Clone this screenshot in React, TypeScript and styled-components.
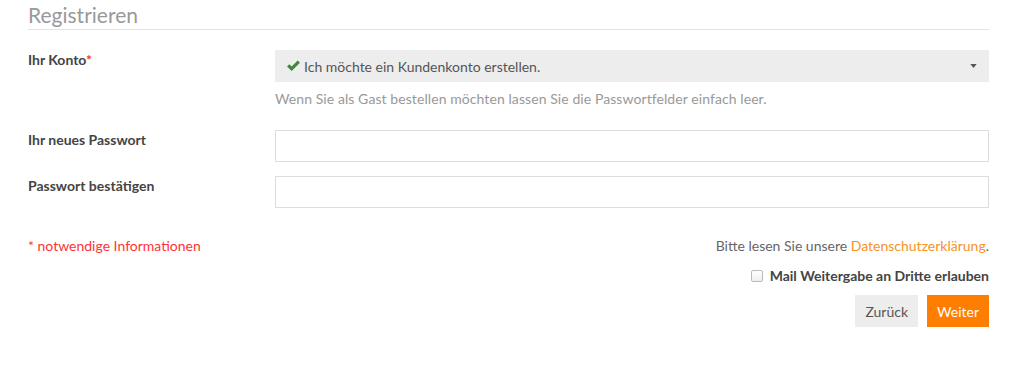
import React from 'react';
import styled, { createGlobalStyle } from 'styled-components';

const Global = createGlobalStyle`
  body {
    margin: 0;
    background: #fff;
    font-family: Lato, "Open Sans", sans-serif;
    font-size: 14px;
    color: #555;
  }
`;

const Page = styled.div`
  padding: 0 35px 0 28px;
`;

const Heading = styled.h2`
  margin: 0;
  padding: 4px 0 3px;
  font-size: 21px;
  font-weight: 400;
  color: #999;
  line-height: 22px;
  border-bottom: 1px solid #e3e3e3;
`;

const Row = styled.div<{ $top: number }>`
  display: grid;
  grid-template-columns: 247px 1fr;
  margin-top: ${p => p.$top}px;
`;

const Label = styled.label`
  font-weight: 700;
  color: #444;
  line-height: 20px;
`;

const Star = styled.span`
  color: #e33;
`;

const Select = styled.div`
  display: flex;
  align-items: center;
  height: 32px;
  padding: 0 12px 0 11px;
  background: #ededed;
  color: #555;
`;

const SelectText = styled.span`
  flex: 1;
  margin-left: 3px;
`;

const Help = styled.div`
  margin-top: 8px;
  color: #999;
  letter-spacing: 0.08px;
`;

const Input = styled.input`
  box-sizing: border-box;
  display: block;
  width: 100%;
  height: 32px;
  border: 1px solid #ddd;
  background: #fff;
  outline: none;
`;

const Footer = styled.div`
  display: flex;
  justify-content: space-between;
  margin-top: 29px;
`;

const Required = styled.div`
  color: #f33;
`;

const Privacy = styled.div`
  color: #666;
`;

const Link = styled.a`
  color: #f7931e;
  text-decoration: none;
`;

const Options = styled.div`
  display: flex;
  flex-direction: column;
  align-items: flex-end;
`;

const CheckRow = styled.label`
  display: flex;
  align-items: center;
  gap: 7px;
  margin-top: 13px;
  font-weight: 700;
  color: #444;
`;

const Box = styled.span`
  box-sizing: border-box;
  width: 12px;
  height: 12px;
  border: 1px solid #bbb;
  border-radius: 2px;
  background: linear-gradient(#fff, #eee);
`;

const Buttons = styled.div`
  display: flex;
  gap: 9px;
  margin-top: 11px;
`;

const Button = styled.button<{ $primary?: boolean }>`
  height: 32px;
  padding: 0 10px;
  border: 0;
  font: inherit;
  background: ${p => (p.$primary ? '#ff7d00' : '#ededed')};
  color: ${p => (p.$primary ? '#fff' : '#555')};
`;

const Check = () => (
  <svg width="15" height="12" viewBox="0 0 16 13">
    <path d="M1 7 L3.5 4.5 L6 7 L12.5 0.5 L15 3 L6 12 Z" fill="#3e8a3a" />
  </svg>
);

const Caret = () => (
  <svg width="7" height="4" viewBox="0 0 8 5">
    <path d="M0 0 H8 L4 5 Z" fill="#555" />
  </svg>
);

export default function App() {
  return (
    <Page>
      <Global />
      <Heading>Registrieren</Heading>

      <Row $top={20}>
        <Label>Ihr Konto<Star>*</Star></Label>
        <div>
          <Select>
            <Check />
            <SelectText>Ich möchte ein Kundenkonto erstellen.</SelectText>
            <Caret />
          </Select>
          <Help>Wenn Sie als Gast bestellen möchten lassen Sie die Passwortfelder einfach leer.</Help>
        </div>
      </Row>

      <Row $top={23}>
        <Label>Ihr neues Passwort</Label>
        <Input type="password" />
      </Row>

      <Row $top={14}>
        <Label>Passwort bestätigen</Label>
        <Input type="password" />
      </Row>

      <Footer>
        <Required>* notwendige Informationen</Required>
        <Options>
          <Privacy>Bitte lesen Sie unsere <Link>Datenschutzerklärung</Link>.</Privacy>
          <CheckRow><Box />Mail Weitergabe an Dritte erlauben</CheckRow>
          <Buttons>
            <Button>Zurück</Button>
            <Button $primary>Weiter</Button>
          </Buttons>
        </Options>
      </Footer>
    </Page>
  );
}
